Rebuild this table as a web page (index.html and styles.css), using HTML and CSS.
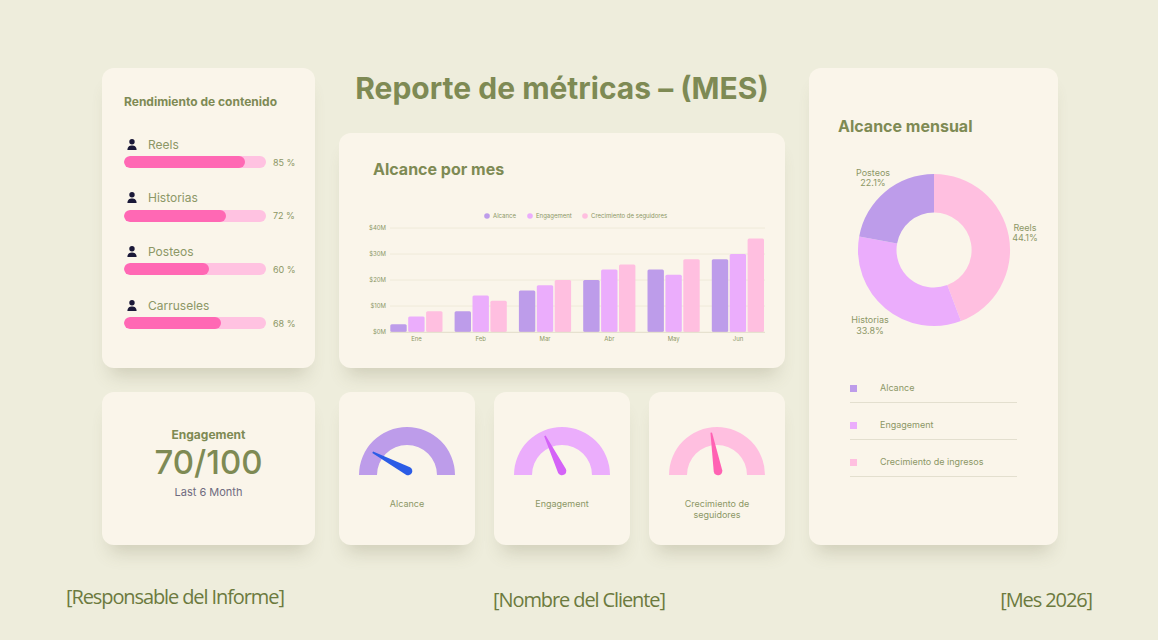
FILE: index.html
```html
<!DOCTYPE html>
<html lang="es">
<head>
<meta charset="utf-8">
<title>Reporte de métricas</title>
<link rel="stylesheet" href="styles.css">
</head>
<body>
<main class="board">
  <section class="card content-card">
    <h2 class="card-title small">Rendimiento de contenido</h2>
    <ul class="items">
      <li class="item">
        <div class="item-head"><svg class="person" viewBox="0 0 10 11"><circle cx="5" cy="2.8" r="2.7"/><path d="M0.4 11 C0.4 7.6 2.4 6.4 5 6.4 C7.6 6.4 9.6 7.6 9.6 11 Z"/></svg><span>Reels</span></div>
        <div class="bar-row"><div class="bar"><div class="fill" style="width:85%"></div></div><span class="pct">85 %</span></div>
      </li>
      <li class="item">
        <div class="item-head"><svg class="person" viewBox="0 0 10 11"><circle cx="5" cy="2.8" r="2.7"/><path d="M0.4 11 C0.4 7.6 2.4 6.4 5 6.4 C7.6 6.4 9.6 7.6 9.6 11 Z"/></svg><span>Historias</span></div>
        <div class="bar-row"><div class="bar"><div class="fill" style="width:72%"></div></div><span class="pct">72 %</span></div>
      </li>
      <li class="item">
        <div class="item-head"><svg class="person" viewBox="0 0 10 11"><circle cx="5" cy="2.8" r="2.7"/><path d="M0.4 11 C0.4 7.6 2.4 6.4 5 6.4 C7.6 6.4 9.6 7.6 9.6 11 Z"/></svg><span>Posteos</span></div>
        <div class="bar-row"><div class="bar"><div class="fill" style="width:60%"></div></div><span class="pct">60 %</span></div>
      </li>
      <li class="item">
        <div class="item-head"><svg class="person" viewBox="0 0 10 11"><circle cx="5" cy="2.8" r="2.7"/><path d="M0.4 11 C0.4 7.6 2.4 6.4 5 6.4 C7.6 6.4 9.6 7.6 9.6 11 Z"/></svg><span>Carruseles</span></div>
        <div class="bar-row"><div class="bar"><div class="fill" style="width:68%"></div></div><span class="pct">68 %</span></div>
      </li>
    </ul>
  </section>

  <section class="middle">
    <h1 class="page-title">Reporte de métricas – (MES)</h1>
    <div class="card chart-card">
      <h2 class="card-title">Alcance por mes</h2>
      <svg class="bar-chart" viewBox="0 0 446 150" width="446" height="150">
        <g class="legend-txt">
          <circle cx="148" cy="16" r="2.8" fill="#BD9CEA"/><text x="154" y="18.2">Alcance</text>
          <circle cx="191" cy="16" r="2.8" fill="#EBADFC"/><text x="197" y="18.2">Engagement</text>
          <circle cx="246" cy="16" r="2.8" fill="#FFBFE0"/><text x="252" y="18.2">Crecimiento de seguidores</text>
        </g>
        <g class="grid">
          <line x1="51" y1="28" x2="426" y2="28"/>
          <line x1="51" y1="54" x2="426" y2="54"/>
          <line x1="51" y1="80" x2="426" y2="80"/>
          <line x1="51" y1="106" x2="426" y2="106"/>
        </g>
        <g class="axis-txt" text-anchor="end">
          <text x="47" y="30">$40M</text>
          <text x="47" y="56">$30M</text>
          <text x="47" y="82">$20M</text>
          <text x="47" y="108">$10M</text>
          <text x="47" y="134">$0M</text>
        </g>
        <g class="bars">
          <rect x="51.3" y="124.2" width="16.4" height="7.8" rx="1.5" fill="#BD9CEA"/>
          <rect x="69.2" y="116.4" width="16.4" height="15.6" rx="1.5" fill="#EBADFC"/>
          <rect x="87.1" y="111.2" width="16.4" height="20.8" rx="1.5" fill="#FFBFE0"/>

          <rect x="115.6" y="111.2" width="16.4" height="20.8" rx="1.5" fill="#BD9CEA"/>
          <rect x="133.5" y="95.6" width="16.4" height="36.4" rx="1.5" fill="#EBADFC"/>
          <rect x="151.4" y="100.8" width="16.4" height="31.2" rx="1.5" fill="#FFBFE0"/>

          <rect x="179.9" y="90.4" width="16.4" height="41.6" rx="1.5" fill="#BD9CEA"/>
          <rect x="197.8" y="85.2" width="16.4" height="46.8" rx="1.5" fill="#EBADFC"/>
          <rect x="215.7" y="80" width="16.4" height="52" rx="1.5" fill="#FFBFE0"/>

          <rect x="244.2" y="80" width="16.4" height="52" rx="1.5" fill="#BD9CEA"/>
          <rect x="262.1" y="69.6" width="16.4" height="62.4" rx="1.5" fill="#EBADFC"/>
          <rect x="280" y="64.4" width="16.4" height="67.6" rx="1.5" fill="#FFBFE0"/>

          <rect x="308.5" y="69.6" width="16.4" height="62.4" rx="1.5" fill="#BD9CEA"/>
          <rect x="326.4" y="74.8" width="16.4" height="57.2" rx="1.5" fill="#EBADFC"/>
          <rect x="344.3" y="59.2" width="16.4" height="72.8" rx="1.5" fill="#FFBFE0"/>

          <rect x="372.8" y="59.2" width="16.4" height="72.8" rx="1.5" fill="#BD9CEA"/>
          <rect x="390.7" y="54" width="16.4" height="78" rx="1.5" fill="#EBADFC"/>
          <rect x="408.6" y="38.4" width="16.4" height="93.6" rx="1.5" fill="#FFBFE0"/>
        </g>
        <line class="baseline" x1="51" y1="132.3" x2="426" y2="132.3"/>
        <g class="axis-txt" text-anchor="middle">
          <text x="77.5" y="141">Ene</text>
          <text x="141.8" y="141">Feb</text>
          <text x="206.1" y="141">Mar</text>
          <text x="270.4" y="141">Abr</text>
          <text x="334.7" y="141">May</text>
          <text x="399" y="141">Jun</text>
        </g>
      </svg>
    </div>
  </section>

  <section class="card monthly-card">
    <h2 class="card-title">Alcance mensual</h2>
    <svg class="donut" viewBox="0 0 249 180" width="249" height="180">
      <path d="M125 9 A76 76 0 0 1 151.9 156.1 L138.3 120.1 A37.5 37.5 0 0 0 125 47.5 Z" fill="#FFBFE0"/>
      <path d="M151.9 156.1 A76 76 0 0 1 50.2 71.6 L88.1 78.4 A37.5 37.5 0 0 0 138.3 120.1 Z" fill="#EBADFC"/>
      <path d="M50.2 71.6 A76 76 0 0 1 125 9 L125 47.5 A37.5 37.5 0 0 0 88.1 78.4 Z" fill="#BD9CEA"/>
      <g class="donut-txt" text-anchor="middle">
        <text x="64" y="11">Posteos</text>
        <text x="64" y="21">22.1%</text>
        <text x="216" y="66">Reels</text>
        <text x="216" y="76">44.1%</text>
        <text x="61" y="158">Historias</text>
        <text x="61" y="169">33.8%</text>
      </g>
    </svg>
    <ul class="legend">
      <li><span class="sq sq-a"></span>Alcance</li>
      <li><span class="sq sq-e"></span>Engagement</li>
      <li><span class="sq sq-c"></span>Crecimiento de ingresos</li>
    </ul>
  </section>

  <section class="card score-card">
    <h3 class="score-label">Engagement</h3>
    <div class="score">70/100</div>
    <div class="score-sub">Last 6 Month</div>
  </section>

  <section class="gauges">
    <div class="card gauge-card">
      <svg class="gauge" viewBox="0 0 100 52" width="100" height="52">
        <path d="M2 50 A48 48 0 0 1 98 50 L80 50 A30 30 0 0 0 20 50 Z" fill="#BD9CEA"/>
        <path transform="translate(51 46) rotate(-62)" d="M-0.8 -40 L0.8 -40 L4.3 0 A4.3 4.3 0 0 1 -4.3 0 Z" fill="#2B5CE6"/>
      </svg>
      <p class="gauge-label">Alcance</p>
    </div>
    <div class="card gauge-card">
      <svg class="gauge" viewBox="0 0 100 52" width="100" height="52">
        <path d="M2 50 A48 48 0 0 1 98 50 L80 50 A30 30 0 0 0 20 50 Z" fill="#EBADFC"/>
        <path transform="translate(50 46) rotate(-26)" d="M-0.8 -39 L0.8 -39 L4.3 0 A4.3 4.3 0 0 1 -4.3 0 Z" fill="#D463F7"/>
      </svg>
      <p class="gauge-label">Engagement</p>
    </div>
    <div class="card gauge-card">
      <svg class="gauge" viewBox="0 0 100 52" width="100" height="52">
        <path d="M2 50 A48 48 0 0 1 98 50 L80 50 A30 30 0 0 0 20 50 Z" fill="#FFBFE0"/>
        <path transform="translate(51 46) rotate(-10)" d="M-0.8 -39 L0.8 -39 L4.3 0 A4.3 4.3 0 0 1 -4.3 0 Z" fill="#FF62B3"/>
      </svg>
      <p class="gauge-label">Crecimiento de<br>seguidores</p>
    </div>
  </section>
</main>

<footer class="footer">
  <span class="f-left">[Responsable del Informe]</span>
  <span class="f-center">[Nombre del Cliente]</span>
  <span class="f-right">[Mes 2026]</span>
</footer>
</body>
</html>
```

FILE: styles.css
```css
* { box-sizing: border-box; }

html, body {
  margin: 0;
  padding: 0;
  background: #EEEDDC;
  font-family: "Inter", "Liberation Sans", sans-serif;
  color: #7E8A54;
}

.board {
  display: grid;
  grid-template-columns: 213px 446px 249px;
  grid-template-rows: 300px 153px;
  column-gap: 24px;
  row-gap: 24px;
  width: 956px;
  margin: 68px 0 0 102px;
}

.card {
  background: #FAF5EA;
  border-radius: 12px;
  box-shadow: 0 15px 18px -8px rgba(110, 105, 70, 0.24);
}

.card-title {
  margin: 0;
  font-size: 16px;
  line-height: 20px;
  font-weight: 700;
  color: #7E8A54;
}

.card-title.small {
  font-size: 12px;
  line-height: 16px;
}

/* content card */
.content-card {
  grid-column: 1;
  grid-row: 1;
  padding: 26px 0 0 22px;
}

.items {
  list-style: none;
  margin: 26px 0 0;
  padding: 0;
  display: flex;
  flex-direction: column;
  gap: 21.7px;
}

.item-head {
  display: flex;
  align-items: center;
  height: 16px;
  padding-left: 3px;
  font-size: 12px;
  color: #8C9766;
}

.person {
  width: 10px;
  height: 11px;
  fill: #1A1838;
  margin-right: 11px;
}

.bar-row {
  display: flex;
  align-items: center;
  margin-top: 4px;
}

.bar {
  width: 142px;
  height: 12px;
  border-radius: 6px;
  background: #FFC2E1;
  overflow: hidden;
}

.fill {
  height: 100%;
  border-radius: 6px;
  background: #FF68B4;
}

.pct {
  margin-left: 7px;
  font-size: 9px;
  color: #8C9766;
}

/* middle */
.middle {
  grid-column: 2;
  grid-row: 1;
  display: flex;
  flex-direction: column;
}

.page-title {
  margin: 0;
  height: 65px;
  padding-top: 2px;
  font-size: 30px;
  line-height: 36px;
  font-weight: 700;
  text-align: center;
  color: #7E8A54;
}

.chart-card {
  flex: 1;
  padding-top: 26px;
}

.chart-card .card-title {
  padding-left: 34px;
}

.bar-chart {
  display: block;
  margin-top: 21px;
}

.legend-txt text {
  font-size: 6px;
  fill: #8C9766;
}

.axis-txt text {
  font-size: 6px;
  fill: #8C9766;
}

.grid line {
  stroke: #ECE7D6;
  stroke-width: 0.8;
}

.baseline {
  stroke: #E2DCC8;
  stroke-width: 1;
}

/* monthly card */
.monthly-card {
  grid-column: 3;
  grid-row: 1 / span 2;
  padding-top: 48px;
}

.monthly-card .card-title {
  padding-left: 29px;
}

.donut {
  display: block;
  margin-top: 29px;
}

.donut-txt text {
  font-size: 9px;
  fill: #8C9766;
}

.legend {
  list-style: none;
  margin: 21px 0 0 41px;
  padding: 0;
  width: 167px;
}

.legend li {
  display: flex;
  align-items: flex-start;
  height: 37px;
  padding-top: 15px;
  line-height: 14px;
  font-size: 9px;
  color: #8C9766;
  border-bottom: 1px solid #E3DFCF;
}

.sq {
  width: 7px;
  height: 7px;
  margin: 3.5px 23px 0 0;
  flex: none;
}

.sq-a { background: #BD9CEA; }
.sq-e { background: #EBADFC; }
.sq-c { background: #FFBFE0; }

/* score card */
.score-card {
  grid-column: 1;
  grid-row: 2;
  display: flex;
  flex-direction: column;
  align-items: center;
  padding-top: 36px;
}

.score-label {
  margin: 0;
  font-size: 12px;
  line-height: 14px;
  font-weight: 700;
  color: #7E8A54;
}

.score {
  font-size: 33px;
  line-height: 40px;
  font-weight: 500;
  color: #7E8A54;
}

.score-sub {
  margin-top: 3px;
  font-size: 11px;
  line-height: 14px;
  color: #6F6B80;
}

/* gauges */
.gauges {
  grid-column: 2;
  grid-row: 2;
  display: grid;
  grid-template-columns: repeat(3, 1fr);
  column-gap: 19px;
}

.gauge-card {
  display: flex;
  flex-direction: column;
  align-items: center;
  padding-top: 33px;
}

.gauge {
  display: block;
}

.gauge-label {
  margin: 21px 0 0;
  font-size: 9px;
  line-height: 11px;
  text-align: center;
  color: #8C9766;
}

/* footer */
.footer {
  display: grid;
  grid-template-columns: 1fr auto 1fr;
  align-items: center;
  margin-top: 43px;
  padding: 0 66px;
  font-family: "Open Sans", "Liberation Sans", sans-serif;
  font-weight: 400;
  font-size: 20px;
  line-height: 24px;
  letter-spacing: -1.1px;
  color: #6C7A3E;
}

.f-left { justify-self: start; position: relative; top: -3px; }
.f-center { justify-self: center; }
.f-right { justify-self: end; }
```
